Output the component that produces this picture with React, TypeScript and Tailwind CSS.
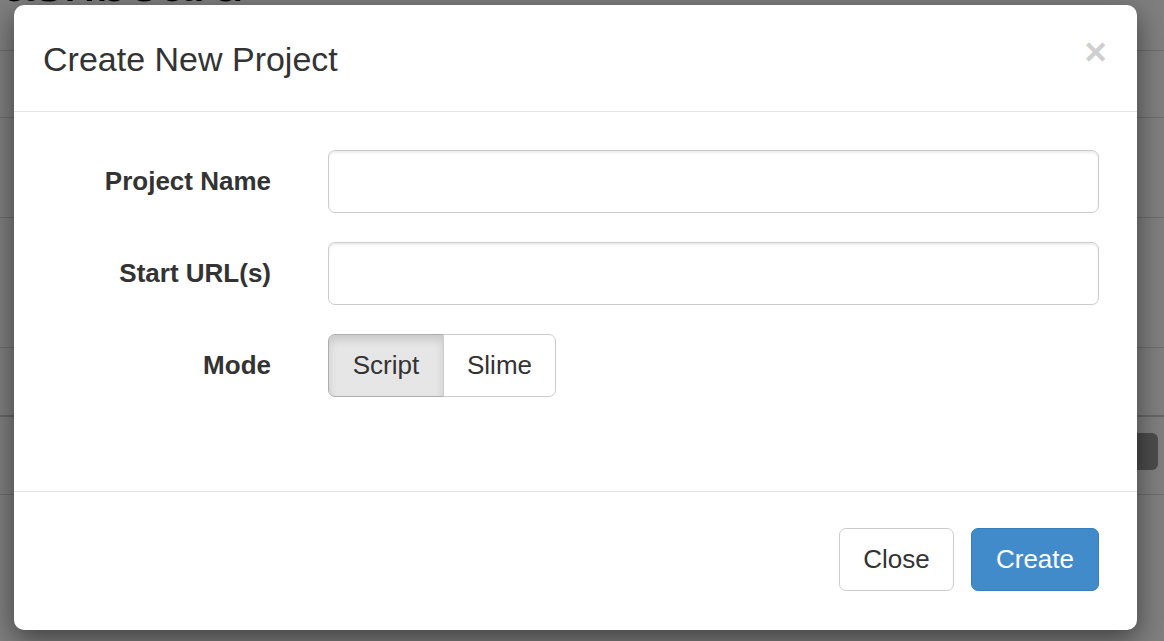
import { useState } from "react";

// Bootstrap-3 style "Create New Project" modal over a dimmed dashboard.
export default function App() {
  const [mode, setMode] = useState<"script" | "slime">("script");

  return (
    <div className="relative h-[641px] w-[1164px] overflow-hidden bg-white font-['Liberation_Sans',Arial,sans-serif] text-[#333]">
      {/* page underneath */}
      <div className="flex flex-col">
        <div className="h-[51px] border-b border-[#ddd] overflow-hidden">
          <h1 className="-mt-[48px] -ml-[30px] text-[58px] leading-[58px] text-black">dashboard</h1>
        </div>
        <div className="h-[67px] border-b border-[#ddd]" />
        <div className="h-[100px] border-b border-[#ddd]" />
        <div className="h-[130px] border-b border-[#ddd]" />
        <div className="h-[69px] border-b-2 border-[#ccc]" />
        <div className="h-[78px] border-b border-[#ddd] flex items-start justify-end pt-[16px] pr-[6px]">
          <div className="h-[37px] w-[40px] rounded-[6px] bg-[#999]" />
        </div>
      </div>

      {/* backdrop */}
      <div className="absolute inset-0 bg-black/50" />

      {/* modal */}
      <div className="absolute inset-0 flex items-start pl-[14px] pt-[5px]">
        <div className="w-[1123px] rounded-[10px] bg-white shadow-[0_9px_28px_rgba(0,0,0,0.5)]">
          <div className="flex items-start justify-between border-b border-[#e5e5e5] pl-[29px] pr-[30px] pt-[31px] pb-[28px]">
            <h4 className="text-[34px] leading-[47px] text-[#333]">Create New Project</h4>
            <button className="mt-[-4px] text-[39px] font-bold leading-[39px] text-black/20" aria-label="Close">
              ×
            </button>
          </div>

          <div className="flex flex-col gap-[29px] pl-[37px] pr-[38px] pt-[38px] pb-[94px]">
            <div className="flex items-center">
              <label className="w-[220px] text-right text-[26px] font-bold">Project Name</label>
              <input
                className="ml-[57px] h-[63px] flex-1 rounded-[7px] border border-[#ccc] px-[22px] text-[26px] shadow-[inset_0_2px_2px_rgba(0,0,0,0.075)] outline-none"
                type="text"
              />
            </div>
            <div className="flex items-center">
              <label className="w-[220px] text-right text-[26px] font-bold">Start URL(s)</label>
              <input
                className="ml-[57px] h-[63px] flex-1 rounded-[7px] border border-[#ccc] px-[22px] text-[26px] shadow-[inset_0_2px_2px_rgba(0,0,0,0.075)] outline-none"
                type="text"
              />
            </div>
            <div className="flex items-center">
              <label className="w-[220px] text-right text-[26px] font-bold">Mode</label>
              <div className="ml-[57px] flex">
                <button
                  onClick={() => setMode("script")}
                  className={
                    mode === "script"
                      ? "h-[63px] w-[116px] rounded-l-[7px] border border-[#adadad] bg-[#e6e6e6] text-[26px] shadow-[inset_0_5px_9px_rgba(0,0,0,0.125)]"
                      : "h-[63px] w-[116px] rounded-l-[7px] border border-[#ccc] bg-white text-[26px]"
                  }
                >
                  Script
                </button>
                <button
                  onClick={() => setMode("slime")}
                  className={
                    mode === "slime"
                      ? "-ml-px h-[63px] w-[113px] rounded-r-[7px] border border-[#adadad] bg-[#e6e6e6] text-[26px] shadow-[inset_0_5px_9px_rgba(0,0,0,0.125)]"
                      : "-ml-px h-[63px] w-[113px] rounded-r-[7px] border border-[#ccc] bg-white text-[26px]"
                  }
                >
                  Slime
                </button>
              </div>
            </div>
          </div>

          <div className="flex justify-end gap-[17px] border-t border-[#e5e5e5] pr-[38px] pt-[36px] pb-[39px]">
            <button className="h-[63px] w-[115px] rounded-[7px] border border-[#ccc] bg-white text-[26px] text-[#333]">
              Close
            </button>
            <button className="h-[63px] w-[128px] rounded-[7px] border border-[#357ebd] bg-[#428bca] text-[26px] text-white">
              Create
            </button>
          </div>
        </div>
      </div>
    </div>
  );
}
